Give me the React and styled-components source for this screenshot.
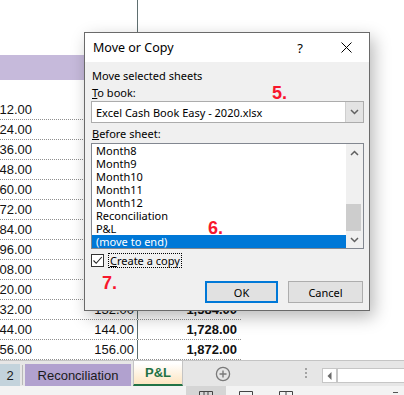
import React from 'react';
import styled, { createGlobalStyle, css } from 'styled-components';

const GlobalStyle = createGlobalStyle`
  html, body {
    margin: 0;
    padding: 0;
    background: #fff;
  }
  body {
    width: 404px;
    height: 395px;
    overflow: hidden;
  }
`;

const Screen = styled.div`
  position: relative;
  width: 404px;
  height: 395px;
  overflow: hidden;
  display: flex;
  flex-direction: column;
  background: #fff;
  font-family: 'Liberation Sans', Arial, sans-serif;
`;

/* ---------- worksheet ---------- */

const Sheet = styled.div`
  height: 360px;
  display: flex;
  flex-direction: column;
`;

const SheetRow = styled.div`
  width: 241px;
  height: ${({ $h }) => $h}px;
  box-sizing: border-box;
  display: grid;
  grid-template-columns: 36px 102px 103px;
  ${({ $band }) => $band && css`background: #c6badb;`}
  ${({ $grid }) => $grid && css`border-bottom: 1px dotted #8f8f8f;`}
`;

const Cell = styled.div`
  display: flex;
  align-items: center;
  justify-content: flex-end;
  white-space: nowrap;
  padding-right: ${({ $pad }) => $pad}px;
  font-size: 13px;
  font-weight: ${({ $bold }) => ($bold ? 700 : 400)};
  color: #111;
  ${({ $rule }) => $rule && css`border-right: 1px solid #5f6f70;`}
`;

/* ---------- sheet tabs ---------- */

const TabBar = styled.div`
  height: 27px;
  box-sizing: border-box;
  display: flex;
  align-items: flex-start;
  background: #e6e6e6;
  border-top: 1px solid #c4c4c4;
`;

const Tab = styled.div`
  height: 22px;
  margin-top: 3px;
  width: ${({ $w }) => $w}px;
  box-sizing: border-box;
  display: flex;
  align-items: center;
  justify-content: center;
  font-size: 13px;
  color: #1b1b1b;
  background: ${({ $bg }) => $bg};
`;

const TabDivider = styled.div`
  width: 1px;
  height: 20px;
  margin: 4px 2px 0 2px;
  background: #b9b9b9;
`;

const ActiveTab = styled.div`
  width: 50px;
  height: 25px;
  margin-left: 2px;
  box-sizing: border-box;
  display: flex;
  align-items: center;
  justify-content: center;
  padding-bottom: 1px;
  font-size: 13px;
  font-weight: 700;
  color: #1f7244;
  background: linear-gradient(#ffffff 10%, #fde5c1);
  border-left: 1px solid #c4c4c4;
  border-right: 1px solid #c4c4c4;
  border-bottom: 2px solid #217346;
`;

const AddSheet = styled.div`
  width: 16px;
  height: 16px;
  margin: 5px 0 0 32px;
  display: flex;
`;

const Dots = styled.div`
  margin: 7px 0 0 74px;
  display: flex;
  flex-direction: column;
  gap: 2px;
  span {
    width: 2px;
    height: 2px;
    background: #a3a3a3;
  }
`;

const HScroll = styled.div`
  margin: 7px 0 0 15px;
  flex: 1;
  height: 15px;
  box-sizing: border-box;
  display: flex;
  background: #fff;
  border: 1px solid #c6c6c6;
  border-right: none;
`;

const HScrollButton = styled.div`
  width: 13px;
  display: flex;
  align-items: center;
  justify-content: center;
  border-right: 2px solid #c6c6c6;
`;

/* ---------- status bar ---------- */

const StatusBar = styled.div`
  flex: 1;
  display: flex;
  background: #f3f3f3;
`;

const ViewButton = styled.div`
  width: ${({ $w }) => $w}px;
  margin-left: ${({ $ml }) => $ml}px;
  display: flex;
  justify-content: center;
  padding-top: 5px;
  ${({ $on }) => $on && css`background: #d5d5d5;`}
`;

/* ---------- dialog ---------- */

const Dialog = styled.div`
  position: absolute;
  left: 84px;
  top: 32px;
  width: 286px;
  height: 279px;
  box-sizing: border-box;
  display: flex;
  flex-direction: column;
  background: #f0f0f0;
  border: 1px solid #6a6a6a;
  box-shadow: 4px 6px 16px rgba(0, 0, 0, 0.28);
  font-family: 'Segoe UI', 'Noto Sans', sans-serif;
  font-size: 11px;
  color: #000;
`;

const TitleBar = styled.div`
  height: 29px;
  display: flex;
  align-items: center;
  background: #fff;
  padding-left: 8px;
`;

const Title = styled.div`
  flex: 1;
  font-size: 12.5px;
`;

const CaptionButton = styled.div`
  width: 46px;
  height: 29px;
  display: flex;
  align-items: center;
  justify-content: center;
  font-size: 13px;
`;

const Body = styled.div`
  display: flex;
  flex-direction: column;
  padding: 6px 5px 0 6px;
`;

const Label = styled.div`
  line-height: 16px;
  padding-left: 1px;
  margin-top: ${({ $mt }) => $mt || 0}px;
`;

const Combo = styled.div`
  height: 22px;
  box-sizing: border-box;
  display: flex;
  background: #fff;
  border: 1px solid #acacac;
`;

const ComboText = styled.div`
  flex: 1;
  display: flex;
  align-items: center;
  padding-left: 4px;
`;

const ComboButton = styled.div`
  width: 17px;
  display: flex;
  align-items: center;
  justify-content: center;
  background: #e3e3e3;
  border-left: 1px solid #cfcfcf;
`;

const ListBox = styled.div`
  height: 106px;
  margin-top: 1px;
  box-sizing: border-box;
  display: flex;
  background: #fff;
  border: 1px solid #828790;
`;

const Items = styled.div`
  flex: 1;
  display: flex;
  flex-direction: column;
`;

const Item = styled.div`
  height: 13px;
  line-height: 13px;
  padding-left: 4px;
  white-space: nowrap;
  ${({ $selected }) =>
    $selected &&
    css`
      background: #0078d7;
      color: #fff;
    `}
`;

const ScrollTrack = styled.div`
  width: 17px;
  display: flex;
  flex-direction: column;
  background: #f0f0f0;
`;

const ScrollArrow = styled.div`
  height: 17px;
  display: flex;
  align-items: center;
  justify-content: center;
`;

const ScrollSpace = styled.div`
  flex: 1;
`;

const ScrollThumb = styled.div`
  height: 27px;
  margin-right: 2px;
  background: #cdcdcd;
`;

const CheckRow = styled.div`
  height: 15px;
  margin-top: 4px;
  display: flex;
  align-items: center;
`;

const CheckBox = styled.div`
  width: 13px;
  height: 13px;
  box-sizing: border-box;
  display: flex;
  align-items: center;
  justify-content: center;
  background: #fff;
  border: 1px solid #333;
`;

const CheckLabel = styled.div`
  margin-left: 4px;
  padding: 0 1px;
  line-height: 13px;
  border: 1px dotted #000;
`;

const Buttons = styled.div`
  margin-top: 13px;
  margin-right: 1px;
  display: flex;
  justify-content: flex-end;
  gap: 10px;
`;

const Button = styled.div`
  width: ${({ $w }) => $w}px;
  height: 22px;
  box-sizing: border-box;
  display: flex;
  align-items: center;
  justify-content: center;
  background: #e1e1e1;
  border: ${({ $default }) => ($default ? '2px solid #0078d7' : '1px solid #adadad')};
`;

const Marker = styled.div`
  position: absolute;
  left: ${({ $x }) => $x}px;
  top: ${({ $y }) => $y}px;
  font-family: 'Liberation Sans', Arial, sans-serif;
  font-size: 18px;
  font-weight: 700;
  line-height: 18px;
  color: #f8172c;
`;

const Chevron = ({ up }) => (
  <svg width="9" height="6" viewBox="0 0 9 6">
    <polyline
      points={up ? '1,5 4.5,1.5 8,5' : '1,1 4.5,4.5 8,1'}
      fill="none"
      stroke="#606060"
      strokeWidth="1.5"
    />
  </svg>
);

const values = [12, 24, 36, 48, 60, 72, 84, 96, 108, 120, 132, 144, 156];
const money = (n) =>
  n.toLocaleString('en-US', { minimumFractionDigits: 2, maximumFractionDigits: 2 });

// rows whose other columns sit clear of the dialog
const shown = (v) => v >= 132;

const sheets = ['Month8', 'Month9', 'Month10', 'Month11', 'Month12', 'Reconciliation', 'P&L', '(move to end)'];

export default function App() {
  return (
    <Screen>
      <GlobalStyle />
      <Sheet>
        <SheetRow $h={55}>
          <Cell />
          <Cell $rule />
          <Cell />
        </SheetRow>
        <SheetRow $h={25} $band>
          <Cell />
          <Cell $rule />
          <Cell />
        </SheetRow>
        <SheetRow $h={20}>
          <Cell />
          <Cell $rule />
          <Cell />
        </SheetRow>
        {values.map((v) => (
          <SheetRow key={v} $h={20} $grid>
            <Cell $pad={4}>{money(v)}</Cell>
            <Cell $pad={3} $rule>
              {shown(v) && money(v)}
            </Cell>
            <Cell $pad={4} $bold>
              {shown(v) && money(v * 12)}
            </Cell>
          </SheetRow>
        ))}
      </Sheet>

      <TabBar>
        <Tab $w={20} $bg="#c3d3dc">2</Tab>
        <TabDivider />
        <Tab $w={106} $bg="#b1a1cf">Reconciliation</Tab>
        <ActiveTab>P&amp;L</ActiveTab>
        <AddSheet>
          <svg width="16" height="16" viewBox="0 0 16 16">
            <circle cx="8" cy="8" r="6.6" fill="none" stroke="#7a7a7a" strokeWidth="1.3" />
            <path d="M8 4.5v7M4.5 8h7" stroke="#7a7a7a" strokeWidth="1.4" />
          </svg>
        </AddSheet>
        <Dots>
          <span />
          <span />
          <span />
        </Dots>
        <HScroll>
          <HScrollButton>
            <svg width="5" height="8" viewBox="0 0 5 8">
              <polygon points="4.5,0 0.5,4 4.5,8" fill="#6a6a6a" />
            </svg>
          </HScrollButton>
        </HScroll>
      </TabBar>

      <StatusBar>
        <ViewButton $w={40} $ml={186} $on>
          <svg width="14" height="4" viewBox="0 0 14 4">
            <path d="M0.5 4V0.5h13V4M5 0.5V4M9 0.5V4" fill="none" stroke="#444" />
          </svg>
        </ViewButton>
        <ViewButton $w={40} $ml={0}>
          <svg width="14" height="4" viewBox="0 0 14 4">
            <path d="M0.5 4V0.5h13V4" fill="none" stroke="#444" />
          </svg>
        </ViewButton>
        <ViewButton $w={40} $ml={0}>
          <svg width="14" height="4" viewBox="0 0 14 4">
            <path d="M0.5 4V0.5h13V4M7 0.5V4" fill="none" stroke="#444" />
          </svg>
        </ViewButton>
        <ViewButton $w={10} $ml={84}>
          <svg width="5" height="3" viewBox="0 0 5 3">
            <path d="M0 1.5h5" stroke="#555" />
          </svg>
        </ViewButton>
      </StatusBar>

      <Dialog>
        <TitleBar>
          <Title>Move or Copy</Title>
          <CaptionButton>?</CaptionButton>
          <CaptionButton>
            <svg width="11" height="11" viewBox="0 0 11 11">
              <path d="M0.5 0.5l10 10M10.5 0.5l-10 10" stroke="#000" strokeWidth="1" />
            </svg>
          </CaptionButton>
        </TitleBar>
        <Body>
          <Label>Move selected sheets</Label>
          <Label $mt={1}>
            <u>T</u>o book:
          </Label>
          <Combo>
            <ComboText>Excel Cash Book Easy - 2020.xlsx</ComboText>
            <ComboButton>
              <Chevron />
            </ComboButton>
          </Combo>
          <Label $mt={3}>
            <u>B</u>efore sheet:
          </Label>
          <ListBox>
            <Items>
              {sheets.map((s, i) => (
                <Item key={s} $selected={i === sheets.length - 1}>
                  {s}
                </Item>
              ))}
            </Items>
            <ScrollTrack>
              <ScrollArrow>
                <Chevron up />
              </ScrollArrow>
              <ScrollSpace />
              <ScrollThumb />
              <ScrollArrow>
                <Chevron />
              </ScrollArrow>
            </ScrollTrack>
          </ListBox>
          <CheckRow>
            <CheckBox>
              <svg width="11" height="11" viewBox="0 0 11 11">
                <polyline points="1.5,5.5 4.2,8.3 9.8,2" fill="none" stroke="#222" strokeWidth="1.1" />
              </svg>
            </CheckBox>
            <CheckLabel>
              <u>C</u>reate a copy
            </CheckLabel>
          </CheckRow>
          <Buttons>
            <Button $w={73} $default>
              OK
            </Button>
            <Button $w={75}>Cancel</Button>
          </Buttons>
        </Body>
      </Dialog>

      <Marker $x={272} $y={84}>5.</Marker>
      <Marker $x={208} $y={219}>6.</Marker>
      <Marker $x={102} $y={274}>7.</Marker>
    </Screen>
  );
}
